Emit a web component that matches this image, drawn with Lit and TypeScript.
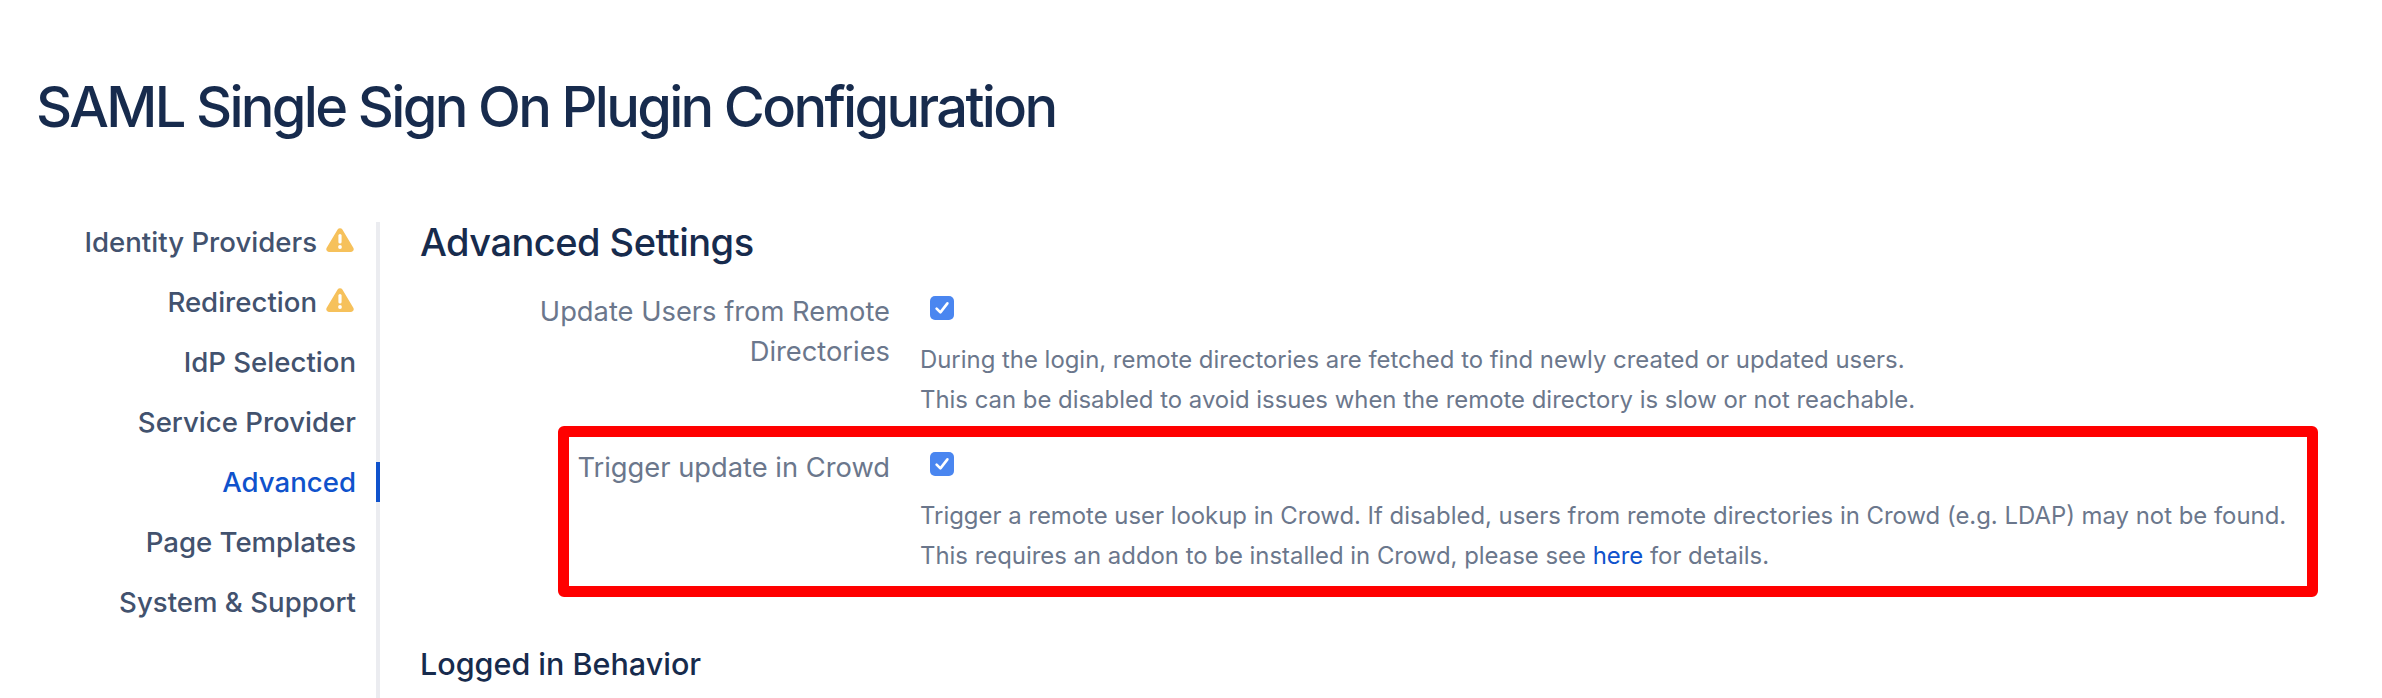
import { LitElement, html, css, svg } from 'lit';
import { customElement } from 'lit/decorators.js';

const navItems = [
  { label: 'Identity Providers', warn: true },
  { label: 'Redirection', warn: true },
  { label: 'IdP Selection' },
  { label: 'Service Provider' },
  { label: 'Advanced', active: true },
  { label: 'Page Templates' },
  { label: 'System & Support' }
];

const warnIcon = html`<svg class="warn" viewBox="0 0 28 24" aria-hidden="true">
  ${svg`<path fill="#f6c15b" d="M11.6 1.6a2.8 2.8 0 0 1 4.8 0l10.9 18.2a2.7 2.7 0 0 1-2.3 4.1H3a2.7 2.7 0 0 1-2.3-4.1z"/>
  <rect x="12.4" y="6" width="3.2" height="9.6" rx="1.6" fill="#fff"/>
  <circle cx="14" cy="19" r="1.9" fill="#fff"/>`}
</svg>`;

const checkbox = html`<svg class="check" viewBox="0 0 24 24" aria-hidden="true">
  ${svg`<rect width="24" height="24" rx="5" fill="#4a86f0"/>
  <path d="M6.6 12.6l3.8 3.8 7-9" fill="none" stroke="#fff" stroke-width="2.6" stroke-linecap="round" stroke-linejoin="round"/>`}
</svg>`;

@customElement('app-root')
export class AppRoot extends LitElement {
  static styles = css`
    :host {
      display: block;
      position: relative;
      height: 698px;
      overflow: hidden;
      background: #fff;
      font-family: Inter, "Liberation Sans", sans-serif;
    }

    h1 {
      margin: 0;
      padding: 72px 0 0 36px;
      height: 222px;
      box-sizing: border-box;
      font-size: 56px;
      line-height: 70px;
      font-weight: 500;
      letter-spacing: -2.68px;
      color: #172b4d;
    }

    .layout {
      display: flex;
    }

    .nav {
      width: 380px;
      height: 476px;
      box-sizing: border-box;
      border-right: 4px solid #ebecf0;
      padding-right: 20px;
      display: flex;
      flex-direction: column;
      gap: 20px;
    }

    .nav-item {
      display: flex;
      justify-content: flex-end;
      align-items: center;
      height: 40px;
      gap: 9px;
      font-size: 27.6px;
      font-weight: 500;
      color: #42526e;
    }

    .nav-item.active {
      color: #0f52cc;
      position: relative;
    }

    .nav-item.active::after {
      content: '';
      position: absolute;
      right: -24px;
      top: 0;
      width: 4px;
      height: 40px;
      background: #0f52cc;
    }

    .warn {
      width: 28px;
      height: 24px;
      margin: 0 2px 4px 0;
    }

    .content {
      padding-left: 40px;
      flex: 1;
    }

    h2 {
      margin: 0;
      height: 60px;
      line-height: 40px;
      font-size: 38px;
      font-weight: 500;
      letter-spacing: -0.52px;
      color: #172b4d;
    }

    .row {
      display: grid;
      grid-template-columns: 470px 1fr;
      column-gap: 30px;
    }

    .row + .row {
      margin-top: 18px;
    }

    .label {
      text-align: right;
      font-size: 27.3px;
      line-height: 40px;
      color: #6b778c;
      padding-top: 10px;
    }

    .check {
      display: block;
      width: 24px;
      height: 24px;
      margin: 14px 0 20px 10px;
    }

    .desc {
      font-size: 23.9px;
      line-height: 40px;
      color: #6b778c;
    }

    .desc a {
      color: #0f52cc;
      text-decoration: none;
    }

    h3 {
      margin: 68px 0 0;
      font-size: 30.5px;
      line-height: 40px;
      font-weight: 500;
      color: #172b4d;
    }

    .highlight {
      position: absolute;
      left: 558px;
      top: 426px;
      width: 1760px;
      height: 171px;
      box-sizing: border-box;
      border: 11px solid #ff0000;
      border-radius: 6px;
      pointer-events: none;
    }
  `;

  render() {
    return html`
      <h1>SAML Single Sign On Plugin Configuration</h1>
      <div class="layout">
        <nav class="nav">
          ${navItems.map(item => html`
            <div class="nav-item ${item.active ? 'active' : ''}">
              <span>${item.label}</span>
              ${item.warn ? warnIcon : ''}
            </div>
          `)}
        </nav>
        <main class="content">
          <h2>Advanced Settings</h2>
          <div class="row">
            <div class="label">Update Users from Remote Directories</div>
            <div>
              ${checkbox}
              <div class="desc">During the login, remote directories are fetched to find newly created or updated users.</div>
              <div class="desc">This can be disabled to avoid issues when the remote directory is slow or not reachable.</div>
            </div>
          </div>
          <div class="row">
            <div class="label">Trigger update in Crowd</div>
            <div>
              ${checkbox}
              <div class="desc">Trigger a remote user lookup in Crowd. If disabled, users from remote directories in Crowd (e.g. LDAP) may not be found.</div>
              <div class="desc">This requires an addon to be installed in Crowd, please see <a href="#">here</a> for details.</div>
            </div>
          </div>
          <h3>Logged in Behavior</h3>
        </main>
      </div>
      <div class="highlight"></div>
    `;
  }
}
